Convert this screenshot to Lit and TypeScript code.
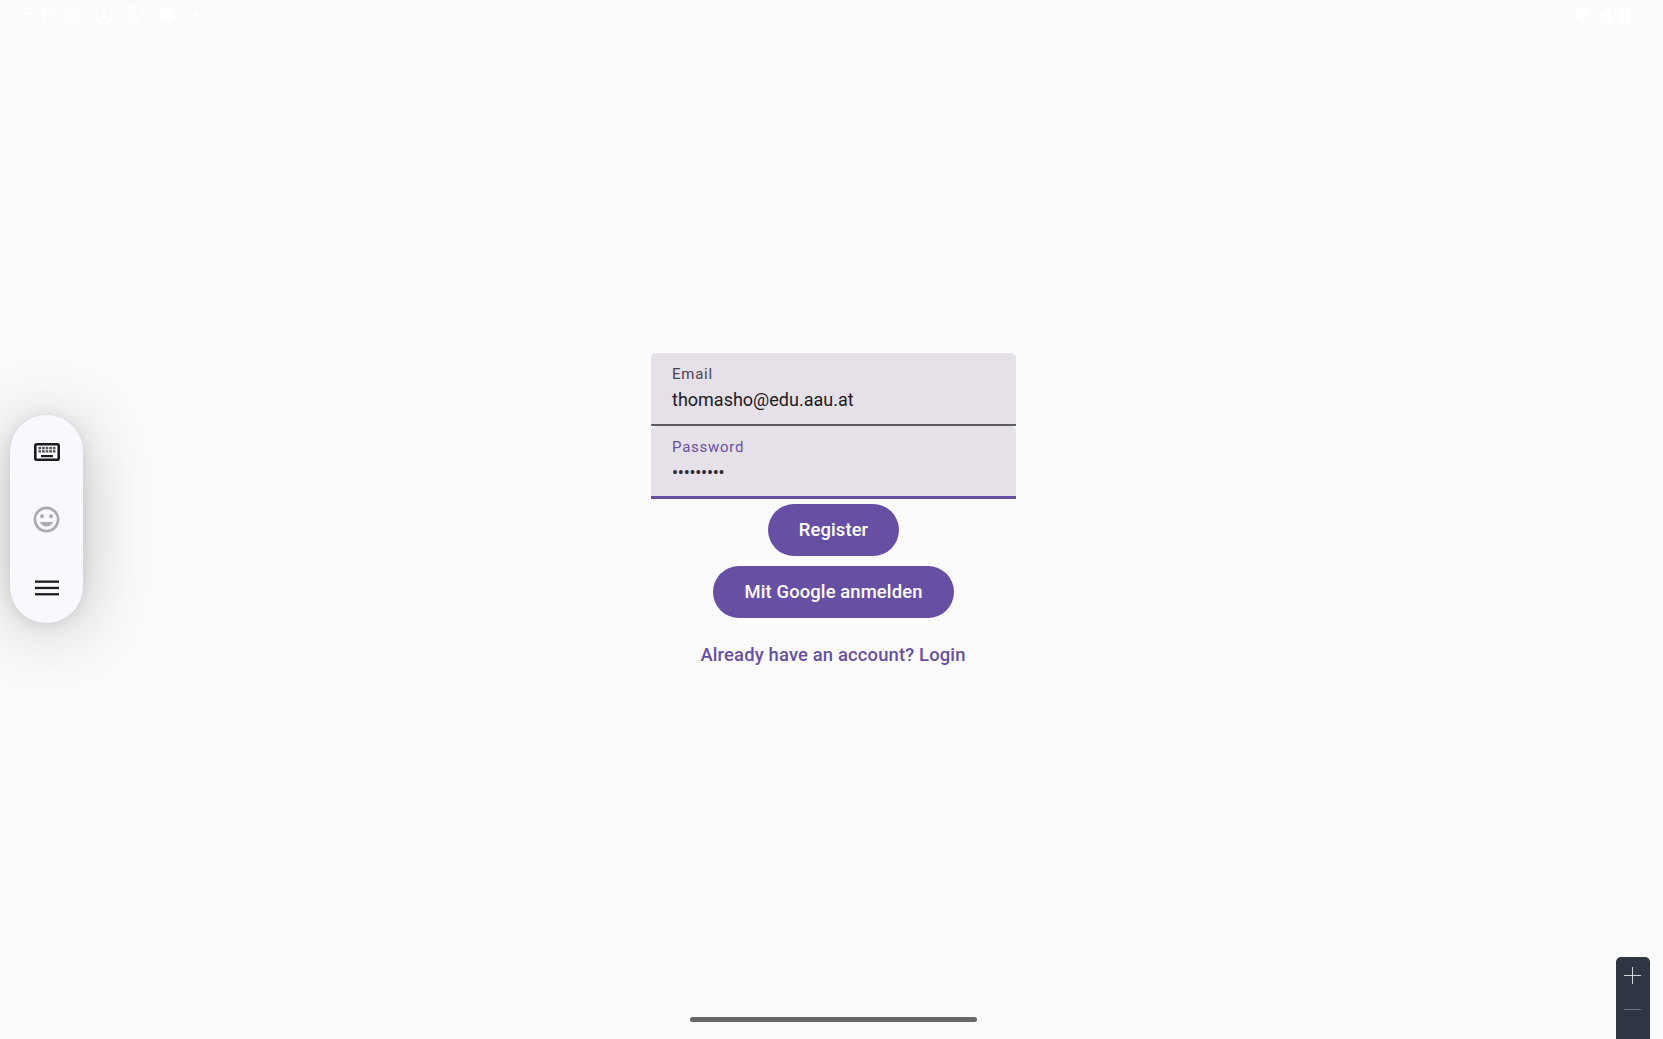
import { LitElement, html, css, svg } from 'lit';
import { customElement } from 'lit/decorators.js';

const icon = (size: number, body: unknown) => html`
  <svg width=${size} height=${size} viewBox="0 0 24 24" fill="currentColor">${body}</svg>
`;

const gear = svg`
  <path fill="none" stroke="currentColor" stroke-width="2.2" d="M19.4 13c.1-.3.1-.7.1-1s0-.7-.1-1l2.1-1.600-2.300-4-2.500 1c-.5-.4-1.100-.7-1.700-1L14.500 2.500h-5L9.100 5.400c-.6.2-1.100.6-1.700 1l-2.500-1-2.300 4L4.600 11c-.1.3-.1.7-.1 1s0 .7.1 1l-2.100 1.600 2.300 4 2.500-1c.5.4 1.100.7 1.700 1l.4 2.900h5l.4-2.900c.6-.2 1.100-.6 1.700-1l2.500 1 2.300-4z"/>
  <circle cx="12" cy="12" r="3" fill="none" stroke="currentColor" stroke-width="2"/>`;
const info = svg`<path fill-rule="evenodd" d="M12 2a10 10 0 1 0 0 20 10 10 0 0 0 0-20zm0 18a8 8 0 1 1 0-16 8 8 0 0 1 0 16zM11 7h2v2h-2zm0 4h2v6h-2z"/>`;
const shield = svg`
  <path fill="none" stroke="currentColor" stroke-width="2" d="M12 2.500 4.500 5.500V11c0 4.700 3.100 9 7.500 10.500 4.400-1.500 7.500-5.800 7.500-10.500V5.500z"/>
  <path fill="none" stroke="currentColor" stroke-width="2" d="M8 6.500c0 4 2.500 8.500 7.500 12"/>`;
const smile = svg`<path fill-rule="evenodd" d="M12 2a10 10 0 1 0 0 20 10 10 0 0 0 0-20zm0 18a8 8 0 1 1 0-16 8 8 0 0 1 0 16zM8.500 11a1.500 1.500 0 1 0 0-3 1.500 1.500 0 0 0 0 3zm7 0a1.500 1.500 0 1 0 0-3 1.500 1.500 0 0 0 0 3zM12 17.500c2.300 0 4.300-1.500 5.100-3.500H6.900c.8 2 2.800 3.500 5.100 3.500z"/>`;

// key grid of the toolbar keyboard: two rows of five, one space bar
const keyCaps = [0, 1, 2, 3, 4].flatMap((col) => [0, 1].map((row) => ({ x: 4.4 + col * 3.6, y: 3.8 + row * 3.3 })));

@customElement('app-root')
export class AppRoot extends LitElement {
  static styles = css`
    :host {
      display: block;
      position: relative;
      height: 1039px;
      overflow: hidden;
      background: #fbfbfb;
      font-family: Roboto, sans-serif;
    }

    .status {
      position: absolute;
      top: 0;
      left: 0;
      right: 0;
      height: 29px;
      display: flex;
      align-items: center;
      justify-content: space-between;
      padding: 0 32px 0 22px;
      color: #fff;
    }

    .status-group {
      display: flex;
      align-items: center;
    }

    .clock {
      width: 35px;
      margin-right: 4px;
      font-size: 18px;
    }

    .status-icon {
      display: flex;
      margin-right: 9.5px;
    }

    .app-square {
      width: 13px;
      height: 13px;
      margin: 0 21px 0 4px;
      background: #fff;
      border-radius: 1px;
    }

    .dot {
      width: 5px;
      height: 5px;
      background: #fff;
      border-radius: 50%;
    }

    .wifi {
      margin-right: 3px;
    }

    .signal {
      margin-right: 9px;
    }

    .form {
      display: flex;
      flex-direction: column;
      align-items: center;
      padding: 353px 0 0 4px;
    }

    .field {
      box-sizing: border-box;
      width: 365px;
      height: 73px;
      padding: 11px 21px 0;
      background: #e6e0e9;
      border-radius: 5px 5px 0 0;
      border-bottom: 2px solid #5f5b65;
    }

    .field.focused {
      border-bottom: 3px solid #6750a4;
    }

    .label {
      font-size: 15px;
      line-height: 21px;
      letter-spacing: 0.75px;
      color: #49454f;
    }

    .focused .label {
      color: #6750a4;
    }

    .value {
      margin-top: 1px;
      font-size: 18px;
      line-height: 27px;
      color: #1d1b20;
    }

    .dots {
      letter-spacing: -0.25px;
      color: #2c2a30;
    }

    .btn {
      box-sizing: border-box;
      height: 52px;
      margin-top: 10px;
      padding: 0 31px 2px;
      display: flex;
      align-items: center;
      background: #6750a4;
      color: #fff;
      border-radius: 26px;
      font-size: 18.4px;
      font-weight: 500;
      letter-spacing: 0.13px;
    }

    .btn.first {
      margin-top: 5px;
    }

    .link {
      margin-top: 26px;
      margin-right: 1px;
      color: #6750a4;
      font-size: 18.4px;
      font-weight: 500;
      line-height: 22px;
      letter-spacing: 0.16px;
    }

    .toolbar {
      position: absolute;
      left: 10px;
      top: 415px;
      width: 73px;
      height: 208px;
      display: flex;
      flex-direction: column;
      align-items: center;
      justify-content: space-between;
      padding: 22px 0 20.5px;
      box-sizing: border-box;
      background: #f9f8ff;
      border-radius: 36.5px;
      box-shadow: 0 6px 70px rgba(0, 0, 0, 0.24), 0 2px 14px rgba(0, 0, 0, 0.1);
      color: #1d1b20;
    }

    .tool {
      height: 30px;
      display: flex;
      align-items: center;
    }

    .muted {
      color: #acabb2;
    }

    .zoom {
      position: absolute;
      left: 1616px;
      top: 957px;
      width: 34px;
      height: 100px;
      border-radius: 5px;
      background: #2e3644;
    }

    .plus-h,
    .plus-v,
    .minus {
      position: absolute;
    }

    .plus-h {
      left: 8px;
      top: 18px;
      width: 17px;
      height: 1px;
      background: #d5d7dc;
    }

    .plus-v {
      left: 16px;
      top: 10px;
      width: 1px;
      height: 17px;
      background: #d5d7dc;
    }

    .minus {
      left: 8px;
      top: 52px;
      width: 17px;
      height: 1px;
      background: #6f7580;
    }

    .home {
      position: absolute;
      left: 690px;
      top: 1017px;
      width: 287px;
      height: 5px;
      border-radius: 3px;
      background: #666;
    }
  `;

  render() {
    return html`
      <div class="status">
        <div class="status-group">
          <span class="clock">5:43</span>
          <span class="status-icon">${icon(22, gear)}</span>
          <span class="status-icon">${icon(22, info)}</span>
          <span class="status-icon">${icon(22, shield)}</span>
          <span class="app-square"></span>
          <span class="dot"></span>
        </div>
        <div class="status-group">
          <svg class="wifi" width="19" height="16" viewBox="0 0 19 16" fill="#fff"><path d="M0 4a14 14 0 0 1 19 0L9.500 16z" /></svg>
          <svg class="signal" width="16" height="17" viewBox="0 0 16 17" fill="#fff"><path d="M16 0v17H0z" /></svg>
          <svg width="11" height="18" viewBox="0 0 11 18" fill="#fff"><path d="M3 2V0h5v2h3v16H0V2z" /></svg>
        </div>
      </div>

      <div class="form">
        <div class="field">
          <div class="label">Email</div>
          <div class="value">thomasho@edu.aau.at</div>
        </div>
        <div class="field focused">
          <div class="label">Password</div>
          <div class="value dots">•••••••••</div>
        </div>
        <div class="btn first">Register</div>
        <div class="btn">Mit Google anmelden</div>
        <div class="link">Already have an account? Login</div>
      </div>

      <div class="toolbar">
        <span class="tool">
          <svg width="26" height="18" viewBox="0 0 26 18">
            <rect x="1.300" y="1.300" width="23.400" height="15.400" rx="1.500" fill="#fff" stroke="#1d1b20" stroke-width="2.600" />
            ${keyCaps.map((k) => svg`<rect x=${k.x} y=${k.y} width="2.700" height="2.500" fill="#5a5960" />`)}
            <rect x="7" y="12" width="12" height="2.200" fill="#1d1b20" />
          </svg>
        </span>
        <span class="tool muted">${icon(31, smile)}</span>
        <span class="tool">
          <svg width="24" height="16" viewBox="0 0 24 16" fill="#1d1b20">
            <rect y="0.500" width="24" height="2.300" />
            <rect y="6.800" width="24" height="2.300" />
            <rect y="13.100" width="24" height="2.300" />
          </svg>
        </span>
      </div>

      <div class="zoom">
        <span class="plus-h"></span><span class="plus-v"></span><span class="minus"></span>
      </div>
      <div class="home"></div>
    `;
  }
}

declare global {
  interface HTMLElementTagNameMap {
    'app-root': AppRoot;
  }
}
